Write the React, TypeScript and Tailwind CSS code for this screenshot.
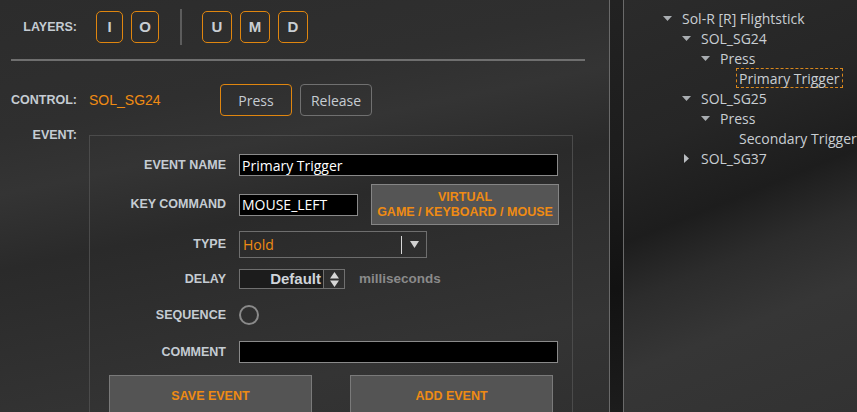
import React from 'react';

const label = "font-['Liberation_Sans',Arial,sans-serif] font-bold text-[12.5px] text-[#c5ccd3] leading-none";
const ui = "font-['Open_Sans','Noto_Sans',sans-serif]";
const orange = 'text-[#ef8b13]';

const layersB = ['U', 'M', 'D'];

type Node = { text: string; pad: string; arrow?: 'down' | 'right'; selected?: boolean };

const tree: Node[] = [
  { text: 'Sol-R [R] Flightstick', pad: 'pl-[36px]', arrow: 'down' },
  { text: 'SOL_SG24', pad: 'pl-[55px]', arrow: 'down' },
  { text: 'Press', pad: 'pl-[74px]', arrow: 'down' },
  { text: 'Primary Trigger', pad: 'pl-[112px]', selected: true },
  { text: 'SOL_SG25', pad: 'pl-[55px]', arrow: 'down' },
  { text: 'Press', pad: 'pl-[74px]', arrow: 'down' },
  { text: 'Secondary Trigger', pad: 'pl-[112px]' },
  { text: 'SOL_SG37', pad: 'pl-[55px]', arrow: 'right' },
];

const LayerButton: React.FC<{ k: string; w: string }> = ({ k, w }) => (
  <button
    className={`${w} h-[32px] rounded-[5px] border border-[#e0860f] flex items-center justify-center font-['Liberation_Sans',Arial,sans-serif] font-bold text-[15px] text-[#c9ced3]`}
  >
    {k}
  </button>
);

const Arrow: React.FC<{ dir: 'down' | 'right' }> = ({ dir }) => (
  <span className="w-[14px] flex items-center justify-center">
    {dir === 'down' ? (
      <svg width="9" height="5" viewBox="0 0 9 5">
        <path d="M0 0 L9 0 L4.5 5 Z" fill="#a9adb1" />
      </svg>
    ) : (
      <svg width="5" height="9" viewBox="0 0 5 9">
        <path d="M0 0 L5 4.5 L0 9 Z" fill="#b9bdc1" />
      </svg>
    )}
  </span>
);

const Row: React.FC<{ name: string; className: string; children: React.ReactNode }> = ({ name, className, children }) => (
  <div className={`flex items-center ${className}`}>
    <div className={`w-[136px] text-right ${label}`}>{name}</div>
    <div className="ml-[13px] flex items-center">{children}</div>
  </div>
);

const App: React.FC = () => {
  return (
    <div className="w-[857px] h-[412px] overflow-hidden flex bg-[#2d2d2d]">
      {/* Left editor panel */}
      <div className="w-[609px] h-full shrink-0 bg-[linear-gradient(168deg,#2c2c2c_0%,#2f2f2f_25%,#343434_36%,#2a2a2a_50%,#2e2e2e_62%,#343434_82%,#303030_100%)]">
        {/* Layers */}
        <div className="flex items-center mt-[11px] h-[32px]">
          <div className={`w-[77px] text-right ${label}`}>LAYERS:</div>
          <div className="ml-[19px] flex items-center gap-[8px]">
            <LayerButton k="I" w="w-[27px]" />
            <LayerButton k="O" w="w-[28px]" />
          </div>
          <div className="ml-[21px] w-[2px] h-[36px] -my-[2px] bg-[#5c5c5c]" />
          <div className="ml-[20px] flex items-center gap-[8px]">
            {layersB.map((k) => (
              <LayerButton key={k} k={k} w="w-[30px]" />
            ))}
          </div>
        </div>

        <div className="ml-[11px] mt-[16px] w-[574px] h-[2px] bg-[#6f6f6f]" />

        {/* Control */}
        <div className="flex items-center mt-[23px] h-[32px]">
          <div className={`w-[77px] text-right ${label}`}>CONTROL:</div>
          <div className={`ml-[12px] w-[131px] font-['Liberation_Sans',Arial,sans-serif] text-[14px] ${orange}`}>SOL_SG24</div>
          <button className={`w-[72px] h-[32px] rounded-[4px] border border-[#e0860f] ${ui} text-[14px] text-[#c6ccd2]`}>Press</button>
          <button className={`ml-[8px] w-[72px] h-[32px] rounded-[4px] border border-[#707070] ${ui} text-[14px] text-[#c6ccd2]`}>Release</button>
        </div>

        {/* Event */}
        <div className="flex mt-[12px]">
          <div className={`w-[77px] h-[14px] flex items-center justify-end ${label}`}>EVENT:</div>
          <div className="ml-[12px] mt-[7px] w-[484px] h-[300px] border border-[#4b4b4b]">
            <Row name="EVENT NAME" className="mt-[18px] h-[22px]">
              <div className={`w-[319px] h-[22px] bg-black border border-[#8a8a8a] px-[2px] flex items-center ${ui} text-[14px] text-white`}>
                Primary Trigger
              </div>
            </Row>
            <Row name="KEY COMMAND" className="mt-[8px] h-[41px]">
              <div className={`w-[119px] h-[22px] bg-black border border-[#8a8a8a] px-[2px] flex items-center ${ui} text-[14px] text-white`}>
                MOUSE_LEFT
              </div>
              <button className={`ml-[13px] w-[188px] h-[41px] bg-[#555555] border border-[#858585] flex flex-col items-center justify-center gap-[2px] font-['Liberation_Sans',Arial,sans-serif] font-bold text-[12.5px] leading-[13px] ${orange}`}>
                <span>VIRTUAL</span>
                <span>GAME / KEYBOARD / MOUSE</span>
              </button>
            </Row>
            <Row name="TYPE" className="mt-[6px] h-[27px]">
              <div className="w-[188px] h-[27px] border border-[#6e6e6e] flex items-center">
                <span className={`flex-1 pl-[3px] ${ui} text-[14px] ${orange}`}>Hold</span>
                <span className="w-[1px] h-[18px] bg-[#d8d8d8]" />
                <span className="w-[24px] flex justify-center">
                  <svg width="9" height="7" viewBox="0 0 9 7">
                    <path d="M0 0 L9 0 L4.5 7 Z" fill="#d0d0d0" />
                  </svg>
                </span>
              </div>
            </Row>
            <Row name="DELAY" className="mt-[11px] h-[20px]">
              <div className="w-[106px] h-[20px] border border-[#707070] flex">
                <div className="w-[83px] h-full bg-[#1c1c1c] flex items-center justify-end pr-[2px] font-['Liberation_Sans',Arial,sans-serif] font-bold text-[15px] text-[#cfd4d9]">
                  Default
                </div>
                <div className="flex-1 border-l border-[#707070] flex items-center justify-center">
                  <svg width="9" height="15" viewBox="0 0 9 15">
                    <path d="M4.5 0 L9 6.5 L0 6.5 Z M0 8.5 L9 8.5 L4.5 15 Z" fill="#d6d6d6" />
                  </svg>
                </div>
              </div>
              <span className="ml-[14px] font-['Liberation_Sans',Arial,sans-serif] font-bold text-[13.5px] text-[#8a8a8a]">milliseconds</span>
            </Row>
            <Row name="SEQUENCE" className="mt-[16px] h-[20px]">
              <span className="w-[20px] h-[20px] rounded-full border-2 border-[#8a8a8a]" />
            </Row>
            <Row name="COMMENT" className="mt-[16px] h-[22px]">
              <div className="w-[319px] h-[22px] bg-black border border-[#8a8a8a]" />
            </Row>
            <div className="mt-[12px] pl-[19px] flex gap-[38px]">
              <button className={`w-[203px] h-[42px] bg-[#545454] border border-[#7a7a7a] font-['Liberation_Sans',Arial,sans-serif] font-bold text-[12.5px] ${orange}`}>
                SAVE EVENT
              </button>
              <button className={`w-[203px] h-[42px] bg-[#545454] border border-[#7a7a7a] font-['Liberation_Sans',Arial,sans-serif] font-bold text-[12.5px] ${orange}`}>
                ADD EVENT
              </button>
            </div>
          </div>
        </div>
      </div>

      {/* Splitter */}
      <div className="w-[15px] h-full shrink-0 border-x border-[#6a6a6a] bg-[linear-gradient(175deg,#222222_0%,#1c1c1c_40%,#121212_70%,#1c1c1c_100%)]" />

      {/* Tree */}
      <div className="flex-1 h-full pt-[8px] bg-[linear-gradient(158deg,#2b2b2b_0%,#262626_30%,#1d1d1d_48%,#2c2c2c_60%,#363636_74%,#323232_100%)]">
        {tree.map((n, i) => (
          <div key={i} className={`h-[20px] flex items-center ${n.pad} ${ui} text-[14px] text-[#c9ced3] whitespace-nowrap`}>
            {n.arrow && <Arrow dir={n.arrow} />}
            {n.selected ? (
              <span className="h-[20px] px-[2px] flex items-center border border-dashed border-[#d9871c]">{n.text}</span>
            ) : (
              <span className={n.arrow ? 'ml-[8px]' : 'ml-[3px]'}>{n.text}</span>
            )}
          </div>
        ))}
      </div>
    </div>
  );
};

export default App;
